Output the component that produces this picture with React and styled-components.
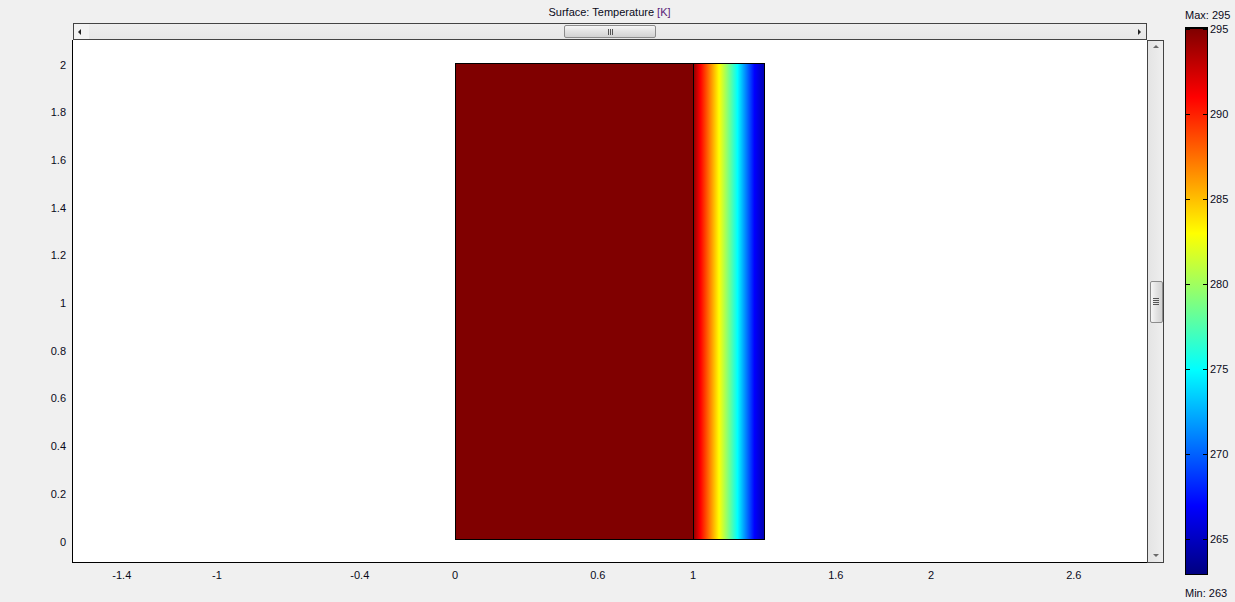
import React from 'react'
import styled, { createGlobalStyle } from 'styled-components'

const GlobalStyle = createGlobalStyle`
  html, body { margin: 0; padding: 0; background: #f0f0f0; }
`

// data -> pixel scales
const X0 = 383
const Y0 = 502
const UNIT_X = 238
const UNIT_Y = 238.5
const T_MAX = 295.12
const PX_PER_K = 17

const xTicks = ['-1.4', '-1', '-0.4', '0', '0.6', '1', '1.6', '2', '2.6']
const yTicks = ['2', '1.8', '1.6', '1.4', '1.2', '1', '0.8', '0.6', '0.4', '0.2', '0']
const cTicks = [295, 290, 285, 280, 275, 270, 265]

const Window = styled.div`
  width: 1235px;
  height: 602px;
  display: flex;
  background: #f0f0f0;
  font-family: "Liberation Sans", Arial, sans-serif;
  font-size: 11px;
  color: #0a0a1a;
  overflow: hidden;
`

const PlotGrid = styled.div`
  display: grid;
  grid-template-columns: 72px 1075px 17px;
  grid-template-rows: 23px 17px 523px 1fr;
`

const Title = styled.div`
  grid-column: 2;
  grid-row: 1;
  display: flex;
  justify-content: center;
  padding-top: 6px;
  line-height: 13px;

  span { color: #5a1e78; }
`

const HScroll = styled.div`
  grid-column: 2;
  grid-row: 2;
  margin-left: 1px;
  display: flex;
  border: 1px solid #434343;
  background: linear-gradient(#eeeeee, #e6e6e6);
`

const VScroll = styled.div`
  grid-column: 3;
  grid-row: 3;
  display: flex;
  flex-direction: column;
  border: 1px solid #434343;
  background: linear-gradient(90deg, #e4e4e4, #eeeeee);
`

const ArrowButton = styled.div`
  flex: 0 0 15px;
  display: flex;
  align-items: center;
  justify-content: center;
  background: ${p => (p.$light ? '#f3f3f3' : 'transparent')};
`

const Arrow = styled.div`
  width: 0;
  height: 0;
  border: 3px solid transparent;
  ${p => p.$dir === 'left' && `border-right: 3px solid #222; border-left-width: 0; margin-left: -4px;`}
  ${p => p.$dir === 'right' && `border-left: 3px solid #222; border-right-width: 0; margin-left: 2px;`}
  ${p => p.$dir === 'up' && `border-bottom: 3px solid #6a6a6a; border-top-width: 0; margin-top: -4px;`}
  ${p => p.$dir === 'down' && `border-top: 3px solid #6a6a6a; border-bottom-width: 0; margin-top: 2px;`}
`

const Track = styled.div`
  flex: 1;
  display: flex;
  align-items: center;
  justify-content: center;
`

const Thumb = styled.div`
  box-sizing: border-box;
  width: ${p => (p.$vertical ? '13px' : '92px')};
  height: ${p => (p.$vertical ? '42px' : '13px')};
  margin-left: ${p => (p.$vertical ? '1px' : '0')};
  border: 1px solid #8c8c8c;
  border-radius: 2px;
  background: ${p =>
    p.$vertical
      ? 'linear-gradient(90deg, #f6f6f6, #e2e2e2 50%, #d2d2d2)'
      : 'linear-gradient(#f6f6f6, #e2e2e2 50%, #d2d2d2)'};
  display: flex;
  flex-direction: ${p => (p.$vertical ? 'column' : 'row')};
  align-items: center;
  justify-content: center;
  gap: 1px;
`

const Grip = styled.i`
  display: block;
  background: #555;
  width: ${p => (p.$vertical ? '6px' : '1px')};
  height: ${p => (p.$vertical ? '1px' : '6px')};
`

const Plot = styled.div`
  grid-column: 2;
  grid-row: 3;
  position: relative;
  background: #fff;
  border-left: 1px solid #000;
  border-bottom: 1px solid #000;

  svg { display: block; }
`

const AxisY = styled.div`
  grid-column: 1;
  grid-row: 3;
  position: relative;
`

const AxisX = styled.div`
  grid-column: 2;
  grid-row: 4;
  position: relative;
`

const TickLabel = styled.div`
  position: absolute;
  line-height: 13px;
  white-space: nowrap;
  ${p => (p.$axis === 'y' ? 'right: 6px;' : 'transform: translateX(-50%); top: 6px;')}
`

const Legend = styled.div`
  flex: 1;
  display: flex;
  flex-direction: column;
  padding-left: 21px;
  line-height: 13px;
`

const LegendText = styled.div`
  padding-top: ${p => p.$top}px;
  white-space: nowrap;
`

const ColorBar = styled.div`
  position: relative;
  box-sizing: border-box;
  width: 23px;
  height: 548px;
  margin-top: 5px;
  border: 1px solid #000;
  border-top-width: 2px;
  background: linear-gradient(to top,
    #000080 0%, #0000ff 12.5%, #00ffff 37.5%, #ffff00 62.5%, #ff0000 87.5%, #800000 100%);
`

const BarTick = styled.div`
  position: absolute;
  left: 0;
  right: 0;
  height: 1px;
  &::before, &::after {
    content: '';
    position: absolute;
    top: 0;
    width: 4px;
    height: 1px;
    background: #000;
  }
  &::before { left: 0; }
  &::after { right: 0; }
`

const BarLabel = styled.span`
  position: absolute;
  left: 24px;
  top: -6px;
  line-height: 13px;
`

const App = () => {
  return (
    <Window>
      <GlobalStyle />
      <PlotGrid>
        <Title>
          Surface: Temperature&nbsp;<span>[K]</span>
        </Title>

        <HScroll>
          <ArrowButton $light><Arrow $dir='left' /></ArrowButton>
          <Track>
            <Thumb>
              <Grip /><Grip /><Grip />
            </Thumb>
          </Track>
          <ArrowButton><Arrow $dir='right' /></ArrowButton>
        </HScroll>

        <AxisY>
          {yTicks.map(t => (
            <TickLabel key={t} $axis='y' style={{ top: Y0 - UNIT_Y * parseFloat(t) - 6.5 }}>
              {t}
            </TickLabel>
          ))}
        </AxisY>

        <Plot>
          <svg width='1074' height='522'>
            <defs>
              <linearGradient id='layer' x1='0' x2='1' y1='0' y2='0'>
                <stop offset='0' stopColor='#900000' />
                <stop offset='0.1' stopColor='#ff0000' />
                <stop offset='0.36' stopColor='#ffff00' />
                <stop offset='0.62' stopColor='#00ffff' />
                <stop offset='0.86' stopColor='#0000ff' />
                <stop offset='1' stopColor='#0000b0' />
              </linearGradient>
            </defs>
            <rect x='382.5' y='23.5' width='238' height='476' fill='#800000' />
            <rect x='620.5' y='23.5' width='71' height='476' fill='url(#layer)' />
            <rect x='382.5' y='23.5' width='309' height='476' fill='none' stroke='#000' />
            <line x1='620.5' y1='23.5' x2='620.5' y2='499.5' stroke='#000' />
          </svg>
        </Plot>

        <VScroll>
          <ArrowButton><Arrow $dir='up' /></ArrowButton>
          <Track>
            <Thumb $vertical>
              <Grip $vertical /><Grip $vertical /><Grip $vertical /><Grip $vertical />
            </Thumb>
          </Track>
          <ArrowButton><Arrow $dir='down' /></ArrowButton>
        </VScroll>

        <AxisX>
          {xTicks.map(t => (
            <TickLabel key={t} $axis='x' style={{ left: X0 + UNIT_X * parseFloat(t) }}>
              {t}
            </TickLabel>
          ))}
        </AxisX>
      </PlotGrid>

      <Legend>
        <LegendText $top={9}>Max: 295</LegendText>
        <ColorBar>
          {cTicks.map(v => (
            <BarTick key={v} style={{ top: (T_MAX - v) * PX_PER_K - 2 }}>
              <BarLabel>{v}</BarLabel>
            </BarTick>
          ))}
        </ColorBar>
        <LegendText $top={12}>Min: 263</LegendText>
      </Legend>
    </Window>
  )
}

export default App
